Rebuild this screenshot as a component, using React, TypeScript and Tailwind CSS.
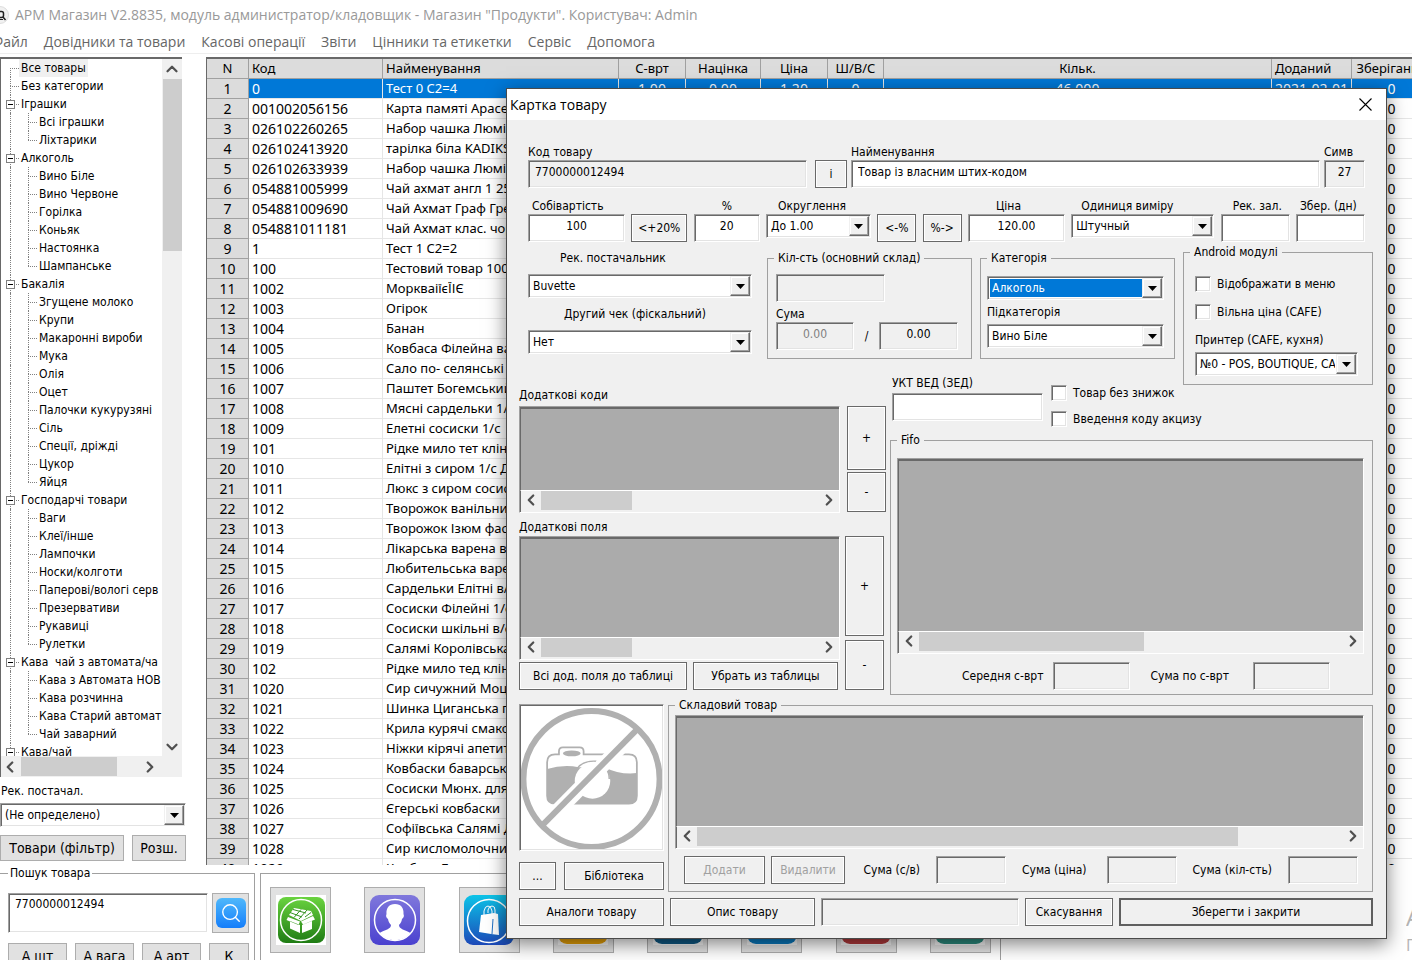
import { useState } from "react"
import type { ReactNode } from "react"
import { ChevronDown, ChevronLeft, ChevronRight, ChevronUp, Search } from "lucide-react"

const sunken =
    "border border-t-[#a0a0a0] border-l-[#a0a0a0] border-b-white border-r-white shadow-[inset_1px_1px_0_#696969,inset_-1px_-1px_0_#e3e3e3]"

const menu = ["Файл", "Довідники та товари", "Касові операції", "Звіти", "Цінники та етикетки", "Сервіс", "Допомога"]

const tree = [
    { title: "Все товары", items: [] },
    { title: "Без категории", items: [] },
    { title: "Іграшки", items: ["Всі іграшки", "Ліхтарики"] },
    { title: "Алкоголь", items: ["Вино Біле", "Вино Червоне", "Горілка", "Коньяк", "Настоянка", "Шампанське"] },
    {
        title: "Бакалія",
        items: [
            "Згущене молоко", "Крупи", "Макаронні вироби", "Мука", "Олія", "Оцет",
            "Палочки кукурузяні", "Сіль", "Спеції, дріжді", "Цукор", "Яйця",
        ],
    },
    {
        title: "Господарчі товари",
        items: [
            "Ваги", "Клеї/інше", "Лампочки", "Носки/колготи",
            "Паперові/вологі серв", "Презервативи", "Рукавиці", "Рулетки",
        ],
    },
    {
        title: "Кава  чай з автомата/ча",
        items: ["Кава з Автомата НОВ", "Кава розчинна", "Кава Старий автомат", "Чай заварний"],
    },
    { title: "Кава/чай", items: ["Кава"] },
]

const goods = [
    ["0", "Тест 0 С2=4"],
    ["001002056156", "Карта памяті Apacer"],
    ["026102260265", "Набор чашка Люмінарк"],
    ["026102413920", "тарілка біла KADIKS"],
    ["026102633939", "Набор чашка Люмінарк"],
    ["054881005999", "Чай ахмат англ 1 25"],
    ["054881009690", "Чай Ахмат Граф Грей"],
    ["054881011181", "Чай Ахмат клас. чорн"],
    ["1", "Тест 1 С2=2"],
    ["100", "Тестовий товар 100"],
    ["1002", "МоркваіїєЇІЄ"],
    ["1003", "Огірок"],
    ["1004", "Банан"],
    ["1005", "Ковбаса Філейна вар"],
    ["1006", "Сало по- селянські"],
    ["1007", "Паштет Богемський"],
    ["1008", "Мясні сардельки 1/с"],
    ["1009", "Елетні сосиски 1/с"],
    ["101", "Рідке мило тет клін"],
    ["1010", "Елітні з сиром 1/с Д"],
    ["1011", "Люкс з сиром сосиски"],
    ["1012", "Творожок ванільний"],
    ["1013", "Творожок Ізюм фас"],
    ["1014", "Лікарська варена в/с"],
    ["1015", "Любительська варена"],
    ["1016", "Сардельки Елітні в/с"],
    ["1017", "Сосиски Філейні 1/с"],
    ["1018", "Сосиски шкільні в/с"],
    ["1019", "Салямі Королівська"],
    ["102", "Рідке мило тед клін"],
    ["1020", "Сир сичужний Моцарела"],
    ["1021", "Шинка Циганська г/к"],
    ["1022", "Крила курячі смакота"],
    ["1023", "Ніжки кірячі апетитні"],
    ["1024", "Ковбаски баварські"],
    ["1025", "Сосиски Мюнх. для"],
    ["1026", "Єгерські ковбаски"],
    ["1027", "Софіївська Салямі Д"],
    ["1028", "Сир кисломолочний"],
    ["1029", "Ковбаса Бондарська"],
]

const columns = [
    { title: "N", width: "w-[42px]", align: "text-center" },
    { title: "Код", width: "w-[134px]", align: "text-left" },
    { title: "Найменування", width: "w-[236px]", align: "text-left text-[13px]" },
    { title: "С-врт", width: "w-[67px]", align: "text-center" },
    { title: "Націнка", width: "w-[75px]", align: "text-center" },
    { title: "Ціна", width: "w-[67px]", align: "text-center" },
    { title: "Ш/В/С", width: "w-[56px]", align: "text-center" },
    { title: "Кільк.", width: "", align: "text-center" },
    { title: "Доданий", width: "w-[80px]", align: "text-left" },
    { title: "Зберігання", width: "w-20", align: "text-center" },
]

const Field = ({ id, label, labelPad = "", width, value = "", center = false, disabled = false }: {
    id: string, label?: string, labelPad?: string, width: string, value?: string, center?: boolean, disabled?: boolean
}) => (
    <div className={`flex flex-col ${width}`}>
        {label && <label htmlFor={id} className={`h-4 leading-4 whitespace-nowrap ${labelPad}`}>{label}</label>}
        <input
            id={id}
            aria-label={label ? undefined : id}
            defaultValue={value}
            readOnly={disabled}
            className={`h-7 w-full px-1.5 pb-1 outline-none ${sunken} ${center ? "text-center" : ""} ${disabled ? "bg-[#f0f0f0]" : "bg-white"}`}
        />
    </div>
)

const Select = ({ id, label, labelPad = "", width, options, selected = false }: {
    id: string, label?: string, labelPad?: string, width: string, options: string[], selected?: boolean
}) => (
    <div className={`flex flex-col ${width}`}>
        {label && <label htmlFor={id} className={`h-4 leading-4 whitespace-nowrap ${labelPad}`}>{label}</label>}
        <div className={`relative h-6 bg-white p-0.5 ${sunken}`}>
            <select
                id={id}
                aria-label={label ? undefined : id}
                className={`block h-full w-full appearance-none pr-5 pl-0.5 text-clip outline-none ${selected ? "bg-[#0078d7] text-white" : ""}`}
            >
                {options.map((o) => <option key={o}>{o}</option>)}
            </select>
            <span className="pointer-events-none absolute inset-y-px right-px flex w-5 items-center justify-center border border-t-[#f0f0f0] border-l-[#f0f0f0] border-r-[#696969] border-b-[#696969] bg-[#f0f0f0] shadow-[inset_-1px_-1px_0_#a0a0a0,inset_1px_1px_0_#fff]">
                <svg width="9" height="5" viewBox="0 0 9 5"><path d="M0 0h9L4.5 5z" /></svg>
            </span>
        </div>
    </div>
)

const Button = ({ children, size, disabled = false, strong = false }: {
    children: ReactNode, size: string, disabled?: boolean, strong?: boolean
}) => (
    <button
        type="button"
        disabled={disabled}
        className={`shrink-0 whitespace-nowrap bg-[#f0f0f0] ${size} ${strong ? "border-2 border-[#5f5f5f]" : "border border-[#696969] shadow-[inset_0_0_0_1px_#fff]"} ${disabled ? "text-[#a0a0a0]" : ""}`}
    >
        {children}
    </button>
)

const GrayButton = ({ children, size, label }: { children: ReactNode, size: string, label?: string }) => (
    <button
        type="button"
        aria-label={label}
        className={`flex shrink-0 items-center justify-center whitespace-nowrap border border-[#adadad] bg-[#e1e1e1] ${size}`}
    >
        {children}
    </button>
)

const Check = ({ children }: { children: ReactNode }) => (
    <label className="flex h-4 items-center gap-1.5 whitespace-nowrap">
        <input type="checkbox" className={`h-4 w-4 appearance-none bg-white ${sunken}`} />
        {children}
    </label>
)

const Group = ({ title, className, pad, children }: {
    title: string, className: string, pad: string, children: ReactNode
}) => (
    <fieldset className={`min-w-0 border border-[#a0a0a0] ${className}`}>
        <legend className="ml-1.5 h-4 px-1 leading-4">{title}</legend>
        <div className={pad}>{children}</div>
    </fieldset>
)

// Empty data grid with its horizontal scroll bar
const Grid = ({ size, thumb }: { size: string, thumb: string }) => (
    <div className={`flex flex-col border border-t-[#a0a0a0] border-l-[#a0a0a0] border-b-white border-r-white ${size}`}>
        <div className="flex-1 border-t-2 border-l border-[#696969] bg-[#ababab]" />
        <div className="flex h-[22px] items-start border-t border-l border-t-white border-l-[#696969] bg-[#f0f0f0] text-[#505050]">
            <ChevronLeft size={18} strokeWidth={3} className="mx-px" />
            <div className={`h-[19px] bg-[#cdcdcd] ${thumb}`} />
            <ChevronRight size={18} strokeWidth={3} className="mr-px ml-auto" />
        </div>
    </div>
)

const NoPhoto = () => (
    <svg viewBox="0 0 142 145" className="h-full w-full" fill="none" stroke="#b0b0b0">
        <circle cx="71" cy="74" r="69" strokeWidth="6" />
        <path d="M26 62v-5q0-8 8-8h4v-3q0-4 4-4h17q4 0 4 4v3h46q8 0 8 8v34q0 8-8 8H34q-8 0-8-8z" strokeWidth="1.8" />
        <ellipse cx="51" cy="48" rx="9" ry="3" fill="#b0b0b0" stroke="none" />
        <path d="M26 64q16-5 32-2h26q16 8 33 6v23q0 8-8 8H34q-8 0-8-8z" fill="#b0b0b0" stroke="none" />
        <circle cx="72" cy="76" r="18" fill="#fff" stroke="none" />
        <path d="M56 64q6-9 20-8M86 64q3 4 3 10" strokeWidth="1.5" />
        <path d="M27 116 114 28" stroke="#fff" strokeWidth="15" />
        <path d="M20 122 119 22" strokeWidth="6" />
    </svg>
)

const BoxIcon = () => (
    <svg width="50" height="50" viewBox="0 0 50 50">
        <defs>
            <linearGradient id="green" x2="0" y2="1"><stop stopColor="#6ad33f" /><stop offset="1" stopColor="#1f7c14" /></linearGradient>
        </defs>
        <rect width="50" height="50" fill="#fff" />
        <rect x="2" y="2" width="47" height="46" rx="8" fill="url(#green)" />
        <circle cx="25" cy="25" r="20.5" fill="none" stroke="#fff" strokeWidth="1.5" />
        <path d="m14 26 10 4v8l-10-4.500zM26 30l10-4v8l-10 4zM12 22l-1.500 3 12 5 1.500-3.500zM37 21l2 3.500-12 5-2-3z" fill="#fff" />
        <path d="m13 20 5-7 17 3 2 4-12 6z" fill="#fff" />
        <path d="m14 17.500 12 4.500M17 14.500l13 3.500M18 22.500l7-8M23 24l8-9M29 22l6-4.500" fill="none" stroke="#349222" />
    </svg>
)

const UserIcon = () => (
    <svg width="50" height="50" viewBox="0 0 50 50">
        <defs>
            <linearGradient id="violet" x2="0" y2="1"><stop stopColor="#8078dc" /><stop offset="1" stopColor="#4a41cf" /></linearGradient>
        </defs>
        <rect width="50" height="50" rx="9" fill="url(#violet)" />
        <circle cx="25" cy="25" r="20.5" fill="none" stroke="#fff" strokeWidth="1.5" />
        <path d="M25 9c-6 0-9 4-8.500 10-1 2 0 4 1.500 5 .5 3 1.500 4 3 6 0 4-5 4.500-11.500 8C13 42.500 18.500 45 25 45s12-2.500 15.500-7C34 34.500 29 34 29 30c1.500-2 2.500-3 3-6 1.500-1 2.500-3 1.500-5C34 13 31 9 25 9z" fill="#fff" />
    </svg>
)

const BagIcon = () => (
    <svg width="50" height="50" viewBox="0 0 50 50">
        <defs>
            <linearGradient id="blue" x2="0" y2="1"><stop stopColor="#0cc4e8" /><stop offset="1" stopColor="#1c48b8" /></linearGradient>
        </defs>
        <rect width="50" height="50" rx="9" fill="url(#blue)" />
        <circle cx="25" cy="26" r="21.5" fill="none" stroke="#fff" strokeWidth="1.5" />
        <path d="m17 20 13-2 4 1 1 21-8-1-12-2z" fill="#fff" />
        <path d="M20 23v-7q1-5 4-5t4 5v6M24 18v-3q1-4 4-4t3 4v4" fill="none" stroke="#fff" />
        <path d="m29 24-1 15" stroke="#1f6fc4" />
    </svg>
)

const TileIcon = ({ color }: { color: string }) => (
    <svg width="50" height="50" viewBox="0 0 50 50">
        <rect width="50" height="50" fill="#f4f4f4" />
        <rect width="50" height="49" rx="9" fill={color} />
        <circle cx="25" cy="22" r="20" fill="none" stroke="#fff" strokeWidth="1.5" />
    </svg>
)

const shortcuts = [
    { label: "Товари", icon: <BoxIcon /> },
    { label: "Клієнти", icon: <UserIcon /> },
    { label: "Продажі", icon: <BagIcon /> },
    { label: "Каса", icon: <TileIcon color="#e6a008" /> },
    { label: "Звіти", icon: <TileIcon color="#0f5a85" /> },
    { label: "Склад", icon: <TileIcon color="#0a7abf" /> },
    { label: "Знижки", icon: <TileIcon color="#b33a3c" /> },
    { label: "Сервіс", icon: <TileIcon color="#2b8c7e" /> },
]

// Dotted guide: vertical part plus the short branch to the text
const Branch = ({ first = false, last = false, box = false }) => (
    <span className="relative flex w-[9px] shrink-0 flex-col self-stretch">
        <span className={`h-[9px] border-[#808080] border-dotted ${first ? "" : "border-l"}`} />
        <span className={`flex-1 border-t border-[#808080] border-dotted ${last ? "" : "border-l"}`} />
        {box && (
            <span className="absolute top-[5px] -left-1 flex h-[9px] w-[9px] items-center justify-center border border-[#808080] bg-white">
                <span className="h-px w-[5px] bg-black" />
            </span>
        )}
    </span>
)

const Tree = () => {
    const [active, setActive] = useState("Все товары")
    return (
        <ul className="min-w-0 flex-1 overflow-hidden">
            {tree.map((group, i) => (
                <li key={group.title}>
                    <div className="flex h-[18px] items-center pl-[9px]">
                        <Branch first={i === 0} box={group.items.length > 0} />
                        <button
                            type="button"
                            onClick={() => setActive(group.title)}
                            className={`h-[18px] px-0.5 whitespace-pre ${active === group.title ? "bg-[#f0f0f0]" : ""}`}
                        >
                            {group.title}
                        </button>
                    </div>
                    <ul>
                        {group.items.map((item, k) => (
                            <li key={item} className="flex h-[18px] items-center pl-[9px]">
                                <span className="w-[18px] shrink-0 self-stretch border-l border-dotted border-[#808080]" />
                                <Branch last={k === group.items.length - 1} />
                                <button
                                    type="button"
                                    onClick={() => setActive(item)}
                                    className={`h-[18px] px-0.5 whitespace-nowrap ${active === item ? "bg-[#f0f0f0]" : ""}`}
                                >
                                    {item}
                                </button>
                            </li>
                        ))}
                    </ul>
                </li>
            ))}
        </ul>
    )
}

const Sidebar = () => (
    <aside className="flex w-[186px] shrink-0 flex-col pb-1">
        <div className="mr-1 flex min-h-0 flex-1 flex-col border-t-2 border-l border-t-[#696969] border-l-[#696969] bg-white">
            <div className="flex min-h-0 flex-1">
                <Tree />
                <div className="flex w-5 flex-col items-center bg-[#f0f0f0] text-[#505050]">
                    <ChevronUp size={18} strokeWidth={3} className="my-px" />
                    <div className="h-[172px] w-[19px] bg-[#cdcdcd]" />
                    <ChevronDown size={18} strokeWidth={3} className="mt-auto" />
                </div>
            </div>
            <div className="flex h-[21px] items-center bg-[#f0f0f0] pr-[23px] text-[#505050]">
                <ChevronLeft size={18} strokeWidth={3} className="mr-0.5" />
                <div className="h-[19px] w-24 bg-[#cdcdcd]" />
                <ChevronRight size={18} strokeWidth={3} className="ml-auto" />
            </div>
        </div>
        <label htmlFor="supplier" className="mt-1.5 mb-1 h-4 pl-px leading-4">Рек. постачал.</label>
        <Select id="supplier" width="w-full" options={["(Не определено)"]} />
        <div className="mt-2 flex gap-2 text-sm">
            <GrayButton size="h-[26px] flex-1">Товари (фільтр)</GrayButton>
            <GrayButton size="h-[26px] w-[54px]">Розш.</GrayButton>
        </div>
    </aside>
)

const GoodsTable = () => (
    <div className="min-w-0 flex-1 overflow-hidden border-t-2 border-l border-[#696969] font-['Noto_Sans',sans-serif] text-sm">
        <table className="w-[calc(100%+20px)] table-fixed border-separate border-spacing-0">
            <thead>
                <tr className="h-5 bg-[#dcdcdc] text-[13px]">
                    {columns.map((c) => (
                        <th
                            key={c.title}
                            className={`overflow-hidden border-r border-b border-[#a0a0a0] px-[3px] py-0 leading-[19px] font-normal whitespace-nowrap ${c.width} ${c.align}`}
                        >
                            {c.title}
                        </th>
                    ))}
                </tr>
            </thead>
            <tbody>
                {goods.map(([code, name], i) => {
                    const row = i === 0
                        ? [code, name, "1.00", "0.00", "1.20", "0", "46.000", "2021-02-01", "0"]
                        : [code, name, "", "", "", "", "", "", "0"]
                    return (
                        <tr key={code} className={`h-5 ${i === 0 ? "bg-[#0078d7] text-white" : "bg-white"}`}>
                            <td className="border-r border-b border-[#a0a0a0] bg-[#dcdcdc] p-0 text-center leading-[19px] text-black">{i + 1}</td>
                            {row.map((cell, k) => (
                                <td
                                    key={k}
                                    className={`overflow-hidden border-r border-b border-[#e6e6e6] px-[3px] py-0 leading-[19px] whitespace-nowrap ${columns[k + 1].align}`}
                                >
                                    {cell}
                                </td>
                            ))}
                        </tr>
                    )
                })}
            </tbody>
        </table>
    </div>
)

const BottomPanel = () => (
    <div className="flex h-[95px] shrink-0 gap-[5px] overflow-hidden">
        <fieldset className="h-28 w-[255px] shrink-0 border border-l-0 border-[#a0a0a0] pl-2">
            <legend className="h-4 px-0.5 leading-4">Пошук товара</legend>
            <div className="mt-3 flex gap-1">
                <textarea
                    aria-label="Пошук товара"
                    defaultValue="7700000012494"
                    className={`h-10 w-[200px] resize-none bg-white px-1.5 py-0.5 leading-4 outline-none ${sunken}`}
                />
                <GrayButton size="h-10 w-[37px]" label="Знайти">
                    <span className="flex h-[30px] w-[30px] items-center justify-center rounded-md bg-linear-to-b from-[#4fb8fb] to-[#147dfa] text-white">
                        <Search size={22} strokeWidth={1.5} />
                    </span>
                </GrayButton>
            </div>
            <div className="mt-2.5 flex gap-2 text-sm">
                <GrayButton size="h-[26px] w-[59px]">А шт</GrayButton>
                <GrayButton size="h-[26px] w-[59px]">А вага</GrayButton>
                <GrayButton size="h-[26px] w-[59px]">А арт</GrayButton>
                <GrayButton size="h-[26px] w-10">К</GrayButton>
            </div>
        </fieldset>
        <div className="mt-2 flex h-28 w-[741px] shrink-0 items-start justify-between border border-[#a0a0a0] px-[9px] pt-[13px]">
            {shortcuts.map((s) => (
                <GrayButton key={s.label} size="h-[66px] w-[61px]" label={s.label}>{s.icon}</GrayButton>
            ))}
        </div>
        <div className="mt-9 ml-auto w-1.5 overflow-hidden font-['Open_Sans',sans-serif] text-[#b4b4b4]">
            <p className="text-2xl leading-8">А</p>
            <p className="text-base leading-6">П</p>
        </div>
    </div>
)

const ProductCard = () => (
    <section
        role="dialog"
        aria-label="Картка товару"
        className="absolute top-[88px] right-[25px] left-[506px] min-w-[880px] border border-[#4a4a4a] bg-[#f0f0f0] shadow-[0_5px_18px_rgba(0,0,0,0.5)]"
    >
        <header className="flex h-[31px] items-center justify-between bg-white pr-[14px] pl-[3px] font-['Open_Sans',sans-serif] text-sm">
            <h2>Картка товару</h2>
            <button type="button" aria-label="Закрити">
                <svg width="13" height="13" viewBox="0 0 13 13" stroke="#000" strokeWidth="1.1"><path d="m.5.5 12 12M12.500.5l-12 12" /></svg>
            </button>
        </header>

        <div className="pt-6 pr-[13px] pb-3 pl-3">
            <div className="flex items-end gap-1 pr-2 pl-[9px]">
                <Field id="code" label="Код товару" width="w-[279px]" value="7700000012494" disabled />
                <div className="pl-1"><Button size="block h-7 w-8">і</Button></div>
                <Field id="name" label="Найменування" width="flex-1" value="Товар із власним штих-кодом" />
                <Field id="chars" label="Симв" width="w-[41px]" value="27" center disabled />
            </div>

            <div className="mt-[10px] flex items-start justify-between pr-2 pl-[9px]">
                <Field id="cost" label="Собівартість" labelPad="pl-1" width="w-[97px]" value="100" center />
                <div className="pt-4"><Button size="block h-7 w-14">&lt;+20%</Button></div>
                <Field id="markup" label="%" labelPad="pl-7" width="w-[66px]" value="20" center />
                <Select id="round" label="Округлення" labelPad="pl-3" width="w-[105px]" options={["До 1.00"]} />
                <div className="pt-4"><Button size="block h-7 w-[39px]">&lt;-%</Button></div>
                <div className="pt-4"><Button size="block h-7 w-[39px]">%-&gt;</Button></div>
                <Field id="price" label="Ціна" labelPad="pl-7" width="w-[97px]" value="120.00" center />
                <Select id="unit" label="Одиниця виміру" labelPad="pl-2.5" width="w-[143px]" options={["Штучный"]} />
                <Field id="stock" label="Рек. зал." labelPad="pl-3" width="w-[69px]" />
                <Field id="keep" label="Збер. (дн)" labelPad="pl-1" width="w-[69px]" />
            </div>

            <div className="mt-2 flex items-start gap-2 pl-[9px]">
                <div className="mr-auto flex w-[224px] flex-col gap-2">
                    <Select id="vendor" label="Рек. постачальник" labelPad="pl-8 mb-2" width="w-full" options={["Buvette"]} />
                    <Select id="receipt" label="Другий чек (фіскальний)" labelPad="pl-9 mb-2" width="w-full" options={["Нет"]} />
                </div>
                <Group title="Кіл-сть (основний склад)" className="h-[109px] w-[205px]" pad="pt-2 pl-2">
                    <Field id="Кількість" width="w-[109px]" disabled />
                    <p className="mt-1 h-4 leading-4">Сума</p>
                    <div className="flex items-center text-center">
                        <div className="text-[#808080]"><Field id="Сума с-врт" width="w-[78px]" value="0.00" center disabled /></div>
                        <span className="w-[25px]">/</span>
                        <Field id="Сума ціна" width="w-[79px]" value="0.00" center disabled />
                    </div>
                </Group>
                <Group title="Категорія" className="h-[109px] w-[195px]" pad="flex flex-col gap-1 pt-2.5 pl-1.5">
                    <Select id="Категорія" width="w-[177px]" options={["Алкоголь"]} selected />
                    <Select id="subcategory" label="Підкатегорія" labelPad="mb-1" width="w-[177px]" options={["Вино Біле"]} />
                </Group>
                <Group title="Android модулі" className="-mt-1.5 -mb-[26px] h-[141px] w-[190px]" pad="flex flex-col gap-3 pt-4 pl-[11px]">
                    <Check>Відображати в меню</Check>
                    <Check>Вільна ціна (CAFE)</Check>
                    <Select id="printer" label="Принтер (CAFE, кухня)" labelPad="mb-1" width="w-[163px]" options={["№0 - POS, BOUTIQUE, CAFE"]} />
                </Group>
            </div>

            <div className="flex gap-1">
                <div className="w-[367px] shrink-0 pt-7">
                    <h3 className="mb-[3px] h-4 leading-4">Додаткові коди</h3>
                    <div className="flex justify-between">
                        <Grid size="h-[107px] w-[321px]" thumb="w-[91px]" />
                        <div className="flex flex-col gap-0.5">
                            <Button size="h-16 w-[39px]">+</Button>
                            <Button size="h-10 w-[39px]">-</Button>
                        </div>
                    </div>
                    <h3 className="mt-1.5 mb-px h-4 leading-4">Додаткові поля</h3>
                    <div className="flex gap-[5px]">
                        <div>
                            <Grid size="h-[124px] w-[321px]" thumb="w-[91px]" />
                            <div className="mt-0.5 flex gap-1.5">
                                <Button size="h-7 w-[168px]">Всі дод. поля до таблиці</Button>
                                <Button size="h-7 w-[145px]">Убрать из таблицы</Button>
                            </div>
                        </div>
                        <div className="flex flex-col gap-1">
                            <Button size="h-[100px] w-[39px]">+</Button>
                            <Button size="h-[50px] w-[39px]">-</Button>
                        </div>
                    </div>
                </div>

                <div className="min-w-0 flex-1 pt-4">
                    <div className="flex gap-2 pl-0.5">
                        <Field id="ukt" label="УКТ ВЕД (ЗЕД)" labelPad="mb-0.5" width="w-[151px]" />
                        <div className="flex flex-col gap-2.5 pt-2.5">
                            <Check>Товар без знижок</Check>
                            <Check>Введення коду акцизу</Check>
                        </div>
                    </div>
                    <Group title="Fifo" className="mt-[5px] h-[263px]" pad="px-1.5 pt-2.5">
                        <div className="mr-0.5">
                            <Grid size="h-[196px] w-full" thumb="w-[225px]" />
                        </div>
                        <div className="mt-2 flex items-center justify-end pr-9">
                            <label htmlFor="Середня с-врт" className="mr-2.5">Середня с-врт</label>
                            <Field id="Середня с-врт" width="w-[77px]" disabled />
                            <label htmlFor="Сума по с-врт" className="mr-6 ml-5">Сума по с-врт</label>
                            <Field id="Сума по с-врт" width="w-[77px]" disabled />
                        </div>
                    </Group>
                </div>
            </div>

            <div className="mt-0.5 flex gap-1">
                <div className="w-[145px] shrink-0 pt-[7px]">
                    <div className={`h-[147px] w-full bg-white p-px ${sunken}`}><NoPhoto /></div>
                    <div className="mt-[11px] flex gap-2">
                        <Button size="h-7 w-[37px]">...</Button>
                        <Button size="h-7 w-[100px]">Бібліотека</Button>
                    </div>
                </div>
                <Group title="Складовий товар" className="h-[195px] flex-1" pad="px-1.5 pt-0.5">
                    <div className="mr-0.5">
                        <Grid size="h-[134px] w-full" thumb="w-[541px]" />
                    </div>
                    <div className="mt-[7px] flex items-center pr-2 pl-[9px]">
                        <Button size="mr-1.5 h-7 w-[81px]" disabled>Додати</Button>
                        <Button size="h-7 w-[74px]" disabled>Видалити</Button>
                        <label htmlFor="Сума (с/в)" className="ml-auto">Сума (с/в)</label>
                        <div className="ml-4"><Field id="Сума (с/в)" width="w-[70px]" disabled /></div>
                        <label htmlFor="Сума (ціна)" className="ml-4">Сума (ціна)</label>
                        <div className="ml-5"><Field id="Сума (ціна)" width="w-[70px]" disabled /></div>
                        <label htmlFor="Сума (кіл-сть)" className="ml-4">Сума (кіл-сть)</label>
                        <div className="ml-4"><Field id="Сума (кіл-сть)" width="w-[70px]" disabled /></div>
                    </div>
                </Group>
            </div>

            <div className="mt-1.5 flex gap-1.5">
                <Button size="h-7 w-[145px]">Аналоги товару</Button>
                <Button size="h-7 w-[145px]">Опис товару</Button>
                <Field id="Опис" width="flex-1" disabled />
                <Button size="h-7 w-[88px]">Скасування</Button>
                <Button size="h-7 w-[254px]" strong>Зберегти і закрити</Button>
            </div>
        </div>
    </section>
)

export default function App() {
    return (
        <div className="relative flex h-screen flex-col overflow-hidden bg-white font-['DejaVu_Sans_Condensed','DejaVu_Sans',sans-serif] text-xs text-black">
            <header className="flex h-[30px] shrink-0 items-center gap-1.5 font-['Open_Sans',sans-serif] text-sm text-[#999]">
                <svg width="9" height="18" viewBox="0 0 9 18" fill="none">
                    <circle cx="0" cy="9" r="8.5" fill="#f1f1f1" stroke="#ddd" />
                    <path d="M0 5.500h1.500q2 0 2 2v2q0 2-2 2H0M3 11l2.500 3" stroke="#222" strokeWidth="1.5" />
                    <path d="M0 13.500h3" stroke="#222" />
                </svg>
                <h1 className="whitespace-nowrap">АРМ Магазин V2.8835, модуль администратор/кладовщик - Магазин "Продукти". Користувач: Admin</h1>
            </header>
            <nav className="-ml-2 flex h-6 shrink-0 items-center gap-4 border-b border-[#eee] font-['Open_Sans',sans-serif] text-sm text-[#666]">
                {menu.map((m) => <a key={m} href="#" className="whitespace-nowrap">{m}</a>)}
            </nav>
            <main className="flex min-h-0 flex-1 gap-5 pt-[3px]">
                <Sidebar />
                <GoodsTable />
            </main>
            <BottomPanel />
            <ProductCard />
        </div>
    )
}
